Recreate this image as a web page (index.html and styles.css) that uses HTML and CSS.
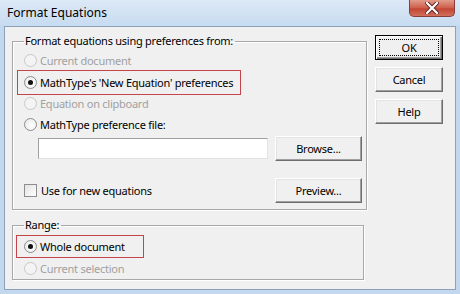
FILE: index.html
```html
<!DOCTYPE html>
<html lang="en">
<head>
  <meta charset="UTF-8" />
  <title>Format Equations</title>
  <link rel="stylesheet" href="styles.css">
</head>
<body>
  <div class="window">
    <div class="titlebar">
      <span class="title">Format Equations</span>
      <span class="close">
        <svg width="14" height="12" viewBox="0 0 14 12">
          <path d="M2 1 L12 11 M12 1 L2 11" stroke="#5a2020" stroke-width="4" stroke-linecap="square"/>
          <path d="M2 1 L12 11 M12 1 L2 11" stroke="#ffffff" stroke-width="2.2" stroke-linecap="square"/>
        </svg>
      </span>
    </div>

    <div class="client">
      <div class="left">
        <fieldset class="group prefs">
          <legend>Format equations using preferences from:</legend>
          <label class="opt disabled"><span class="radio"></span>Current document</label>
          <label class="opt marked"><span class="radio checked"></span>MathType's 'New Equation' preferences</label>
          <label class="opt disabled"><span class="radio"></span>Equation on clipboard</label>
          <label class="opt"><span class="radio"></span>MathType preference file:</label>
          <div class="file-row">
            <span class="textbox"></span>
            <span class="btn">Browse...</span>
          </div>
          <div class="check-row">
            <label class="opt"><span class="checkbox"></span>Use for new equations</label>
            <span class="btn">Preview...</span>
          </div>
        </fieldset>

        <fieldset class="group range">
          <legend>Range:</legend>
          <label class="opt marked short"><span class="radio checked"></span>Whole document</label>
          <label class="opt disabled"><span class="radio"></span>Current selection</label>
        </fieldset>
      </div>

      <div class="actions">
        <span class="btn default"><span class="focus">OK</span></span>
        <span class="btn">Cancel</span>
        <span class="btn">Help</span>
      </div>
    </div>
  </div>
</body>
</html>
```

FILE: styles.css
```css
* {
  box-sizing: border-box;
}

body {
  margin: 0;
  font-family: 'Noto Sans', 'Open Sans', sans-serif;
  font-size: 11px;
  letter-spacing: -0.25px;
  color: #000;
}

.window {
  width: 460px;
  height: 294px;
  background: #c3d8ef;
  display: flex;
  flex-direction: column;
}

.titlebar {
  height: 26px;
  display: flex;
  justify-content: space-between;
  align-items: flex-start;
  background: linear-gradient(#dce9f6, #c7dbf0);
}

.title {
  margin: 5px 0 0 7px;
  font-size: 12px;
  letter-spacing: 0;
  line-height: 16px;
}

.close {
  width: 46px;
  height: 17px;
  margin-right: 5px;
  border: 1px solid #8a3b3b;
  border-top: none;
  border-radius: 0 0 5px 5px;
  background: linear-gradient(#e39b8a, #cd5e4b 50%, #c24432 55%, #d1715d);
  display: flex;
  align-items: center;
  justify-content: center;
}

.client {
  flex: 1;
  margin: 0 4px 4px 4px;
  border: 1px solid #8da2b8;
  background: #f0f0f0;
  display: flex;
  gap: 8px;
  padding: 7px 12px 0 7px;
}

.left {
  width: 355px;
  display: flex;
  flex-direction: column;
}

.group {
  margin: 0;
  border: 1px solid #a8a8a8;
  box-shadow: inset 1px 1px #fff, 1px 1px #fff;
  display: flex;
  flex-direction: column;
  padding: 2px 4px 0 11px;
}

.group legend {
  padding: 0 2px 0 1px;
  line-height: 14px;
}

.prefs {
  padding-bottom: 6px;
}

.range {
  width: 352px;
  margin-top: 8px;
  padding-top: 3px;
  height: 62px;
}

.opt {
  height: 21px;
  display: flex;
  align-items: center;
  white-space: nowrap;
}

.opt.disabled {
  color: #a0a0a0;
}

.opt.marked {
  height: 25px;
  margin: -1px 0 -2px -7px;
  padding-left: 6px;
  width: 224px;
  border: 1px solid #c4454c;
}

.opt.marked.short {
  width: 128px;
  height: 23px;
  margin: 0 0 0 -8px;
  padding-left: 7px;
}

.radio {
  width: 13px;
  height: 13px;
  margin-right: 3px;
  border: 1px solid #8d8d8d;
  border-radius: 50%;
  background: radial-gradient(circle at 60% 60%, #ffffff, #e6e6e6);
  display: flex;
  align-items: center;
  justify-content: center;
  flex-shrink: 0;
}

.radio.checked::after {
  content: "";
  width: 5px;
  height: 5px;
  border-radius: 50%;
  background: #111;
}

.disabled .radio {
  border-color: #c8c8c8;
  background: #f4f4f4;
}

.checkbox {
  width: 13px;
  height: 13px;
  margin-right: 4px;
  border: 1px solid #8d8d8d;
  background: linear-gradient(135deg, #e2e2e2, #ffffff);
  flex-shrink: 0;
}

.file-row {
  display: flex;
  align-items: center;
  gap: 7px;
  margin: 1px 0 0 14px;
}

.textbox {
  width: 230px;
  height: 21px;
  background: #fff;
  border: 1px solid;
  border-color: #a0a0a0 #e3e3e3 #e3e3e3 #a0a0a0;
}

.check-row {
  display: flex;
  align-items: center;
  justify-content: space-between;
  margin-top: 17px;
}

.btn {
  width: 87px;
  height: 25px;
  display: flex;
  align-items: center;
  justify-content: center;
  background: #f0f0f0;
  border: 1px solid;
  border-color: #fff #6d6d6d #6d6d6d #fff;
  box-shadow: inset -1px -1px #a0a0a0, inset 1px 1px #e3e3e3;
  flex-shrink: 0;
}

.actions {
  width: 68px;
  display: flex;
  flex-direction: column;
  gap: 7px;
  padding-top: 1px;
}

.actions .btn {
  width: 68px;
}

.btn.default {
  border: 1px solid #000;
  box-shadow: inset 1px 1px #fff, inset -1px -1px #6d6d6d, inset -2px -2px #a0a0a0;
  padding: 3px;
}

.focus {
  width: 100%;
  height: 100%;
  border: 1px dotted #000;
  display: flex;
  align-items: center;
  justify-content: center;
}
```
